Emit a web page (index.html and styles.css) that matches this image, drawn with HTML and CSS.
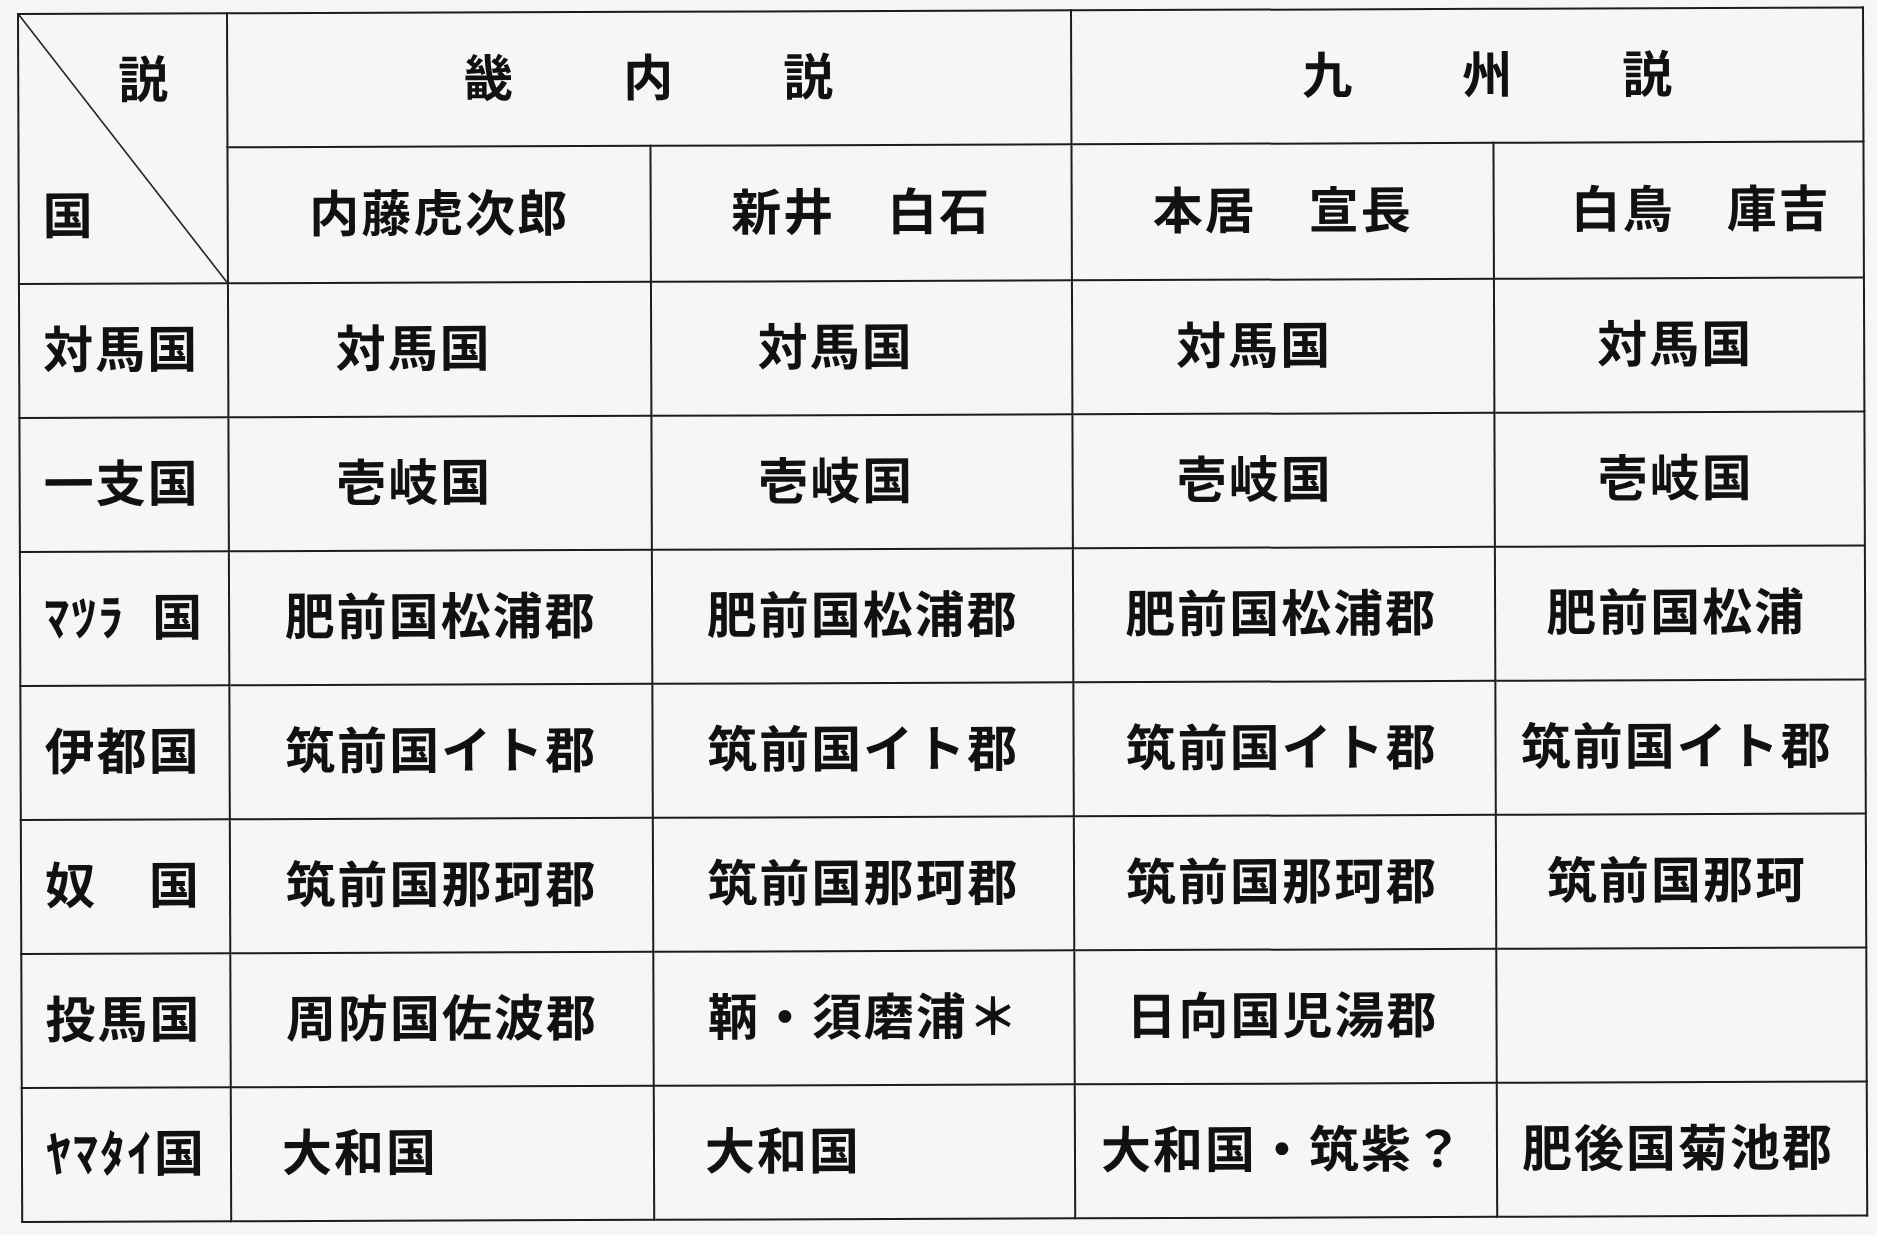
FILE: index.html
```html
<!DOCTYPE html>
<html lang="ja">
<head>
<meta charset="utf-8">
<title>邪馬台国への道程 諸説比較</title>
<link rel="stylesheet" href="styles.css">
</head>
<body>
<main class="page">
<table class="chart">
  <colgroup>
    <col class="c-koku"><col class="c-a"><col class="c-b"><col class="c-c"><col class="c-d">
  </colgroup>
  <thead>
    <tr class="h1">
      <th class="corner" rowspan="2">
        <svg class="diag" viewBox="0 0 100 100" preserveAspectRatio="none" aria-hidden="true"><line x1="0" y1="0" x2="100" y2="100"/></svg>
        <div class="corner-set">説</div>
        <div class="corner-koku">国</div>
      </th>
      <th class="group" colspan="2"><span class="spread"><span>畿</span><span>内</span><span>説</span></span></th>
      <th class="group kyushu" colspan="2"><span class="spread"><span>九</span><span>州</span><span>説</span></span></th>
    </tr>
    <tr class="h2">
      <th class="person">内藤虎次郎</th>
      <th class="person">新井　白石</th>
      <th class="person">本居　宣長</th>
      <th class="person shiratori">白鳥　庫吉</th>
    </tr>
  </thead>
  <tbody>
    <tr>
      <td class="koku">対馬国</td>
      <td class="shift">対馬国</td>
      <td class="shift">対馬国</td>
      <td class="c4 shift">対馬国</td>
      <td class="c5">対馬国</td>
    </tr>
    <tr>
      <td class="koku">一支国</td>
      <td class="shift">壱岐国</td>
      <td class="shift">壱岐国</td>
      <td class="c4 shift">壱岐国</td>
      <td class="c5">壱岐国</td>
    </tr>
    <tr>
      <td class="koku">ﾏﾂﾗ&ensp;国</td>
      <td>肥前国松浦郡</td>
      <td>肥前国松浦郡</td>
      <td class="c4">肥前国松浦郡</td>
      <td class="c5">肥前国松浦</td>
    </tr>
    <tr>
      <td class="koku">伊都国</td>
      <td>筑前国イト郡</td>
      <td>筑前国イト郡</td>
      <td class="c4">筑前国イト郡</td>
      <td class="c5">筑前国イト郡</td>
    </tr>
    <tr>
      <td class="koku">奴　国</td>
      <td>筑前国那珂郡</td>
      <td>筑前国那珂郡</td>
      <td class="c4">筑前国那珂郡</td>
      <td class="c5">筑前国那珂</td>
    </tr>
    <tr>
      <td class="koku">投馬国</td>
      <td>周防国佐波郡</td>
      <td>鞆・須磨浦＊</td>
      <td class="c4">日向国児湯郡</td>
      <td class="c5"></td>
    </tr>
    <tr>
      <td class="koku">ﾔﾏﾀｲ国</td>
      <td class="left">大和国</td>
      <td class="left">大和国</td>
      <td class="c4">大和国・筑紫？</td>
      <td class="c5">肥後国菊池郡</td>
    </tr>
  </tbody>
</table>
</main>
</body>
</html>
```
FILE: styles.css
```css
html, body {
  margin: 0;
  padding: 0;
}

body {
  width: 1877px;
  height: 1235px;
  overflow: hidden;
  background: #f6f6f5;
  color: #111;
  font-family: "Noto Sans CJK JP", "Noto Sans CJK SC", sans-serif;
}

.page {
  padding: 13px 0 0 17px;
}

.chart {
  border-collapse: collapse;
  table-layout: fixed;
  width: 1845px;
  transform: rotate(-0.2deg);
  transform-origin: 0 0;
  font-size: 50px;
  line-height: 50px;
  font-weight: 700;
  letter-spacing: 2px;
}

.c-koku { width: 209px; }
.c-a { width: 423px; }
.c-b { width: 421px; }
.c-c { width: 422px; }
.c-d { width: 370px; }

.chart th,
.chart td {
  border: 2px solid #1d1d1d;
  padding: 0 0 10px 0;
  text-align: center;
  vertical-align: middle;
  font-weight: 700;
  white-space: nowrap;
}

.h1 { height: 134px; }
.h2 { height: 136px; }
.chart tbody tr { height: 134px; }

/* corner cell with diagonal */
.chart th.corner {
  position: relative;
  vertical-align: top;
  text-align: left;
  padding: 0;
}

.diag {
  position: absolute;
  left: 0;
  top: 0;
  width: 100%;
  height: 100%;
}

.diag line {
  stroke: #222;
  stroke-width: 1.6;
  vector-effect: non-scaling-stroke;
}

.corner-set {
  text-align: right;
  padding: 36px 56px 0 0;
}

.corner-koku {
  padding: 86px 0 0 23px;
}

/* group headings */
.spread {
  display: inline-flex;
  gap: 108px;
}

.chart th.kyushu {
  padding-left: 42px;
}

.chart th.shiratori {
  padding-left: 44px;
}

/* body cells */
.chart td.koku {
  text-align: left;
  padding-left: 23px;
}

.chart td.c4 {
  padding-right: 6px;
}

.chart td.c5 {
  padding-right: 8px;
}

.chart td.shift {
  padding-right: 52px;
}

.chart td.c4.shift {
  padding-right: 58px;
}

.chart td.left {
  text-align: left;
  padding-left: 50px;
}
```
